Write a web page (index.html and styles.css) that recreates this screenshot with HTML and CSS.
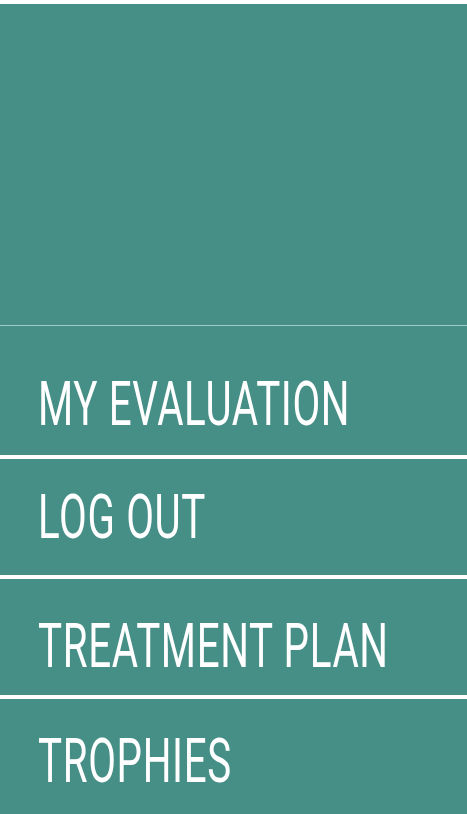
FILE: index.html
```html
<!DOCTYPE html>
<html lang="en">
<head>
<meta charset="utf-8">
<title>Menu</title>
<link rel="stylesheet" href="styles.css">
</head>
<body>
<div class="app">
  <div class="header"></div>
  <nav class="menu">
    <a class="item item-eval" href="#"><span class="label">MY EVALUATION</span></a>
    <a class="item item-logout" href="#"><span class="label">LOG OUT</span></a>
    <a class="item item-plan" href="#"><span class="label">TREATMENT PLAN</span></a>
    <a class="item item-trophies" href="#"><span class="label">TROPHIES</span></a>
  </nav>
</div>
</body>
</html>
```
FILE: styles.css
```css
html, body {
  margin: 0;
  padding: 0;
  background: #ffffff;
}
body {
  font-family: Roboto, "Liberation Sans", sans-serif;
}
.app {
  margin-top: 4px;
  height: 810px;
  background: #468f87;
  display: flex;
  flex-direction: column;
  overflow: hidden;
}
.header {
  height: 321px;
  flex: none;
  border-bottom: 1px solid #9ccac4;
}
.menu {
  display: flex;
  flex-direction: column;
  flex: 1;
}
.item {
  display: block;
  flex: none;
  box-sizing: border-box;
  padding-left: 38px;
  color: #ffffff;
  text-decoration: none;
  border-bottom: 4px solid #ffffff;
}
.item:last-child {
  border-bottom: none;
  flex: 1;
}
.label {
  display: inline-block;
  font-size: 62px;
  line-height: 62px;
  font-weight: 400;
  letter-spacing: 1px;
  white-space: nowrap;
  transform: scaleX(0.65);
  transform-origin: left center;
}
.item-eval { height: 133px; padding-top: 47px; }
.item-logout { height: 120px; padding-top: 27px; }
.item-plan { height: 120px; padding-top: 36px; }
.item-trophies { padding-top: 31px; }
```
